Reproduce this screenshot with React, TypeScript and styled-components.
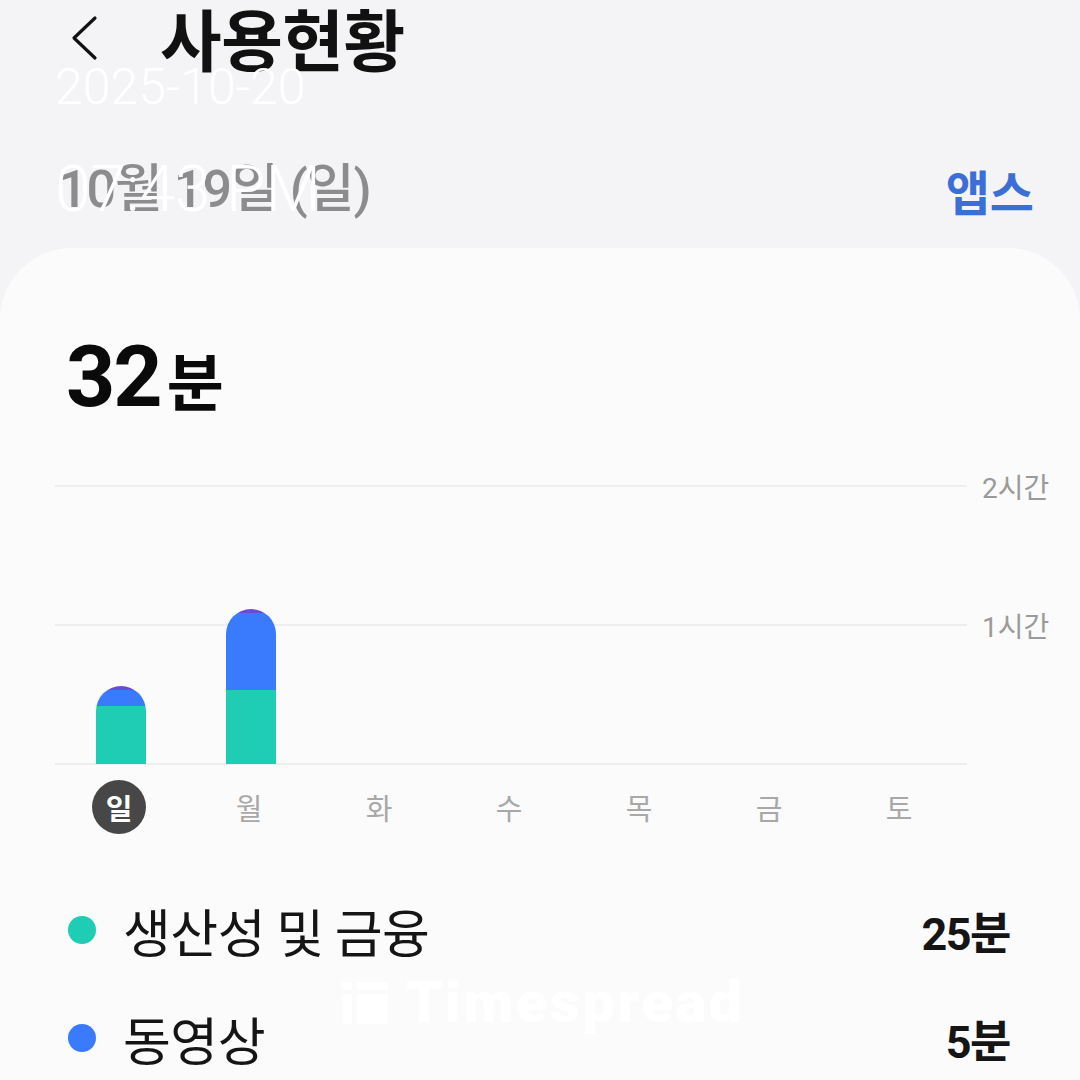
import React from 'react';
import styled, { createGlobalStyle } from 'styled-components';

const GlobalStyle = createGlobalStyle`
  html, body {
    margin: 0;
    padding: 0;
    background: #f4f4f6;
  }
  body {
    font-family: Roboto, "Noto Sans CJK KR", sans-serif;
  }
`;

const Screen = styled.div`
  position: relative;
  width: 1080px;
  height: 1080px;
  overflow: hidden;
  background: #f4f4f6;
  display: flex;
  flex-direction: column;
`;

const TopBar = styled.div`
  flex-shrink: 0;
  display: flex;
  align-items: center;
  height: 80px;
  padding-left: 68px;
  gap: 52px;
`;

const BackButton = styled.div`
  width: 40px;
  height: 56px;
  display: flex;
  align-items: center;
  margin-top: -4px;
`;

const Title = styled.h1`
  margin: -8px 0 0 0;
  font-family: "Noto Sans CJK KR", sans-serif;
  font-size: 67px;
  font-weight: 700;
  color: #111;
  letter-spacing: -0.5px;
  line-height: 1;
`;

const SubHeader = styled.div`
  flex-shrink: 0;
  display: flex;
  justify-content: space-between;
  align-items: center;
  height: 70px;
  margin-top: 75px;
  padding: 0 46px 0 58px;
`;

const DateLabel = styled.span`
  font-family: Roboto, "Noto Sans CJK KR", sans-serif;
  font-size: 52px;
  line-height: 1;
  font-weight: 500;
  color: #8c8c8e;
  letter-spacing: -1px;
`;

const AppsLink = styled.span`
  font-family: "Noto Sans CJK KR", sans-serif;
  font-size: 48px;
  line-height: 1;
  font-weight: 700;
  color: #3b6fd6;
`;

const Stamp = styled.div<{ $top: number; $size: number }>`
  position: absolute;
  left: 55px;
  top: ${(p) => p.$top}px;
  font-family: Roboto, sans-serif;
  font-weight: 300;
  font-size: ${(p) => p.$size}px;
  line-height: 1;
  color: #ffffff;
  white-space: nowrap;
`;

const Card = styled.div`
  flex: 1 0 auto;
  margin-top: 23px;
  background: #fbfbfb;
  border-radius: 72px 72px 0 0;
  padding: 86px 0 0 0;
  display: flex;
  flex-direction: column;
`;

const Total = styled.div`
  display: flex;
  align-items: baseline;
  padding-left: 66px;
  line-height: 1;
  color: #0a0a0a;
`;

const TotalNumber = styled.span`
  font-family: Roboto, sans-serif;
  font-size: 86px;
  font-weight: 700;
  letter-spacing: -2px;
`;

const TotalUnit = styled.span`
  font-family: "Noto Sans CJK KR", sans-serif;
  font-size: 62px;
  font-weight: 700;
  margin-left: 6px;
`;

const Chart = styled.div`
  display: grid;
  margin-top: 65px;
  margin-left: 55px;
`;

const Grid = styled.div`
  grid-area: 1 / 1;
  height: 280px;
  display: flex;
  flex-direction: column;
  justify-content: space-between;
`;

const GridLine = styled.div`
  height: 2px;
  display: flex;
  align-items: center;
`;

const Rule = styled.div`
  width: 912px;
  height: 2px;
  background: #eeeeee;
`;

const AxisLabel = styled.span`
  margin-left: 15px;
  font-family: Roboto, "Noto Sans CJK KR", sans-serif;
  font-size: 28px;
  color: #9a9a9a;
  white-space: nowrap;
`;

const Columns = styled.div`
  grid-area: 1 / 1;
  width: 912px;
  height: 279px;
  display: grid;
  grid-template-columns: repeat(7, 130px);
  align-items: end;
`;

const Slot = styled.div`
  display: flex;
  justify-content: center;
  align-items: flex-end;
  height: 100%;
`;

const Bar = styled.div`
  width: 50px;
  display: flex;
  flex-direction: column-reverse;
  border-radius: 25px 25px 0 0;
  overflow: hidden;
  margin-left: 2px;
`;

const Segment = styled.div<{ $color: string }>`
  background: ${(p) => p.$color};
`;

const Days = styled.div`
  display: grid;
  grid-template-columns: repeat(7, 130px);
  margin-left: 57px;
  margin-top: 15px;
`;

const Day = styled.div<{ $active?: boolean }>`
  justify-self: center;
  width: 54px;
  height: 54px;
  border-radius: 50%;
  display: flex;
  align-items: center;
  justify-content: center;
  font-family: "Noto Sans CJK KR", sans-serif;
  font-size: 29px;
  font-weight: ${(p) => (p.$active ? 700 : 400)};
  color: ${(p) => (p.$active ? '#ffffff' : '#a8a8a8')};
  background: ${(p) => (p.$active ? '#474747' : 'transparent')};
  margin-left: -6px;
`;

const Legend = styled.div`
  display: flex;
  flex-direction: column;
  margin-top: 42px;
  padding: 0 70px 0 68px;
`;

const LegendRow = styled.div`
  display: flex;
  align-items: center;
  height: 108px;
`;

const Dot = styled.span<{ $color: string }>`
  width: 28px;
  height: 28px;
  border-radius: 50%;
  background: ${(p) => p.$color};
  flex-shrink: 0;
`;

const LegendName = styled.span`
  flex: 1;
  margin-left: 27px;
  font-family: "Noto Sans CJK KR", sans-serif;
  font-size: 52px;
  font-weight: 400;
  color: #151515;
  letter-spacing: -0.5px;
`;

const LegendValue = styled.span`
  font-family: Roboto, "Noto Sans CJK KR", sans-serif;
  font-size: 45px;
  font-weight: 700;
  color: #151515;
  letter-spacing: -1.5px;
`;

const Watermark = styled.div`
  position: absolute;
  left: 342px;
  top: 968px;
  display: flex;
  align-items: center;
  gap: 18px;
  font-family: Roboto, sans-serif;
  font-weight: 900;
  font-size: 58px;
  color: #ffffff;
  letter-spacing: 2.5px;
`;

const HOUR_PX = 139;

const TEAL = '#1ecdb4';
const BLUE = '#3a7bfd';
const PURPLE = '#6a4bd6';

type DayData = { label: string; segments: number[] };

const days: DayData[] = [
  { label: '일', segments: [25, 7, 1.5] },
  { label: '월', segments: [32, 33, 2] },
  { label: '화', segments: [] },
  { label: '수', segments: [] },
  { label: '목', segments: [] },
  { label: '금', segments: [] },
  { label: '토', segments: [] },
];

const colors = [TEAL, BLUE, PURPLE];

const categories = [
  { name: '생산성 및 금융', value: '25분', color: TEAL },
  { name: '동영상', value: '5분', color: BLUE },
];

export default function App() {
  return (
    <Screen>
      <GlobalStyle />
      <TopBar>
        <BackButton>
          <svg width="30" height="46" viewBox="0 0 30 46" fill="none">
            <path d="M27 3 L6 23 L27 43" stroke="#111" strokeWidth="3.2" strokeLinecap="round" strokeLinejoin="round" />
          </svg>
        </BackButton>
        <Title>사용현황</Title>
      </TopBar>

      <SubHeader>
        <DateLabel>10월 19일 (일)</DateLabel>
        <AppsLink>앱스</AppsLink>
      </SubHeader>

      <Card>
        <Total>
          <TotalNumber>32</TotalNumber>
          <TotalUnit>분</TotalUnit>
        </Total>

        <Chart>
          <Grid>
            <GridLine>
              <Rule />
              <AxisLabel>2시간</AxisLabel>
            </GridLine>
            <GridLine>
              <Rule />
              <AxisLabel>1시간</AxisLabel>
            </GridLine>
            <GridLine>
              <Rule />
            </GridLine>
          </Grid>
          <Columns>
            {days.map((d) => (
              <Slot key={d.label}>
                {d.segments.length > 0 && (
                  <Bar>
                    {d.segments.map((m, i) => (
                      <Segment key={i} $color={colors[i]} style={{ height: (m / 60) * HOUR_PX }} />
                    ))}
                  </Bar>
                )}
              </Slot>
            ))}
          </Columns>
        </Chart>

        <Days>
          {days.map((d, i) => (
            <Day key={d.label} $active={i === 0}>
              {d.label}
            </Day>
          ))}
        </Days>

        <Legend>
          {categories.map((c) => (
            <LegendRow key={c.name}>
              <Dot $color={c.color} />
              <LegendName>{c.name}</LegendName>
              <LegendValue>{c.value}</LegendValue>
            </LegendRow>
          ))}
        </Legend>
      </Card>

      <Stamp $top={62} $size={50}>2025-10-20</Stamp>
      <Stamp $top={158} $size={64}>07:43 PM</Stamp>

      <Watermark>
        <svg width="46" height="44" viewBox="0 0 46 44">
          <rect x="0" y="2" width="10" height="8" fill="#fff" />
          <rect x="0" y="14" width="10" height="30" fill="#fff" />
          <rect x="15" y="2" width="31" height="8" fill="#fff" />
          <rect x="15" y="14" width="31" height="30" fill="#fff" />
        </svg>
        <span>Timespread</span>
      </Watermark>
    </Screen>
  );
}
